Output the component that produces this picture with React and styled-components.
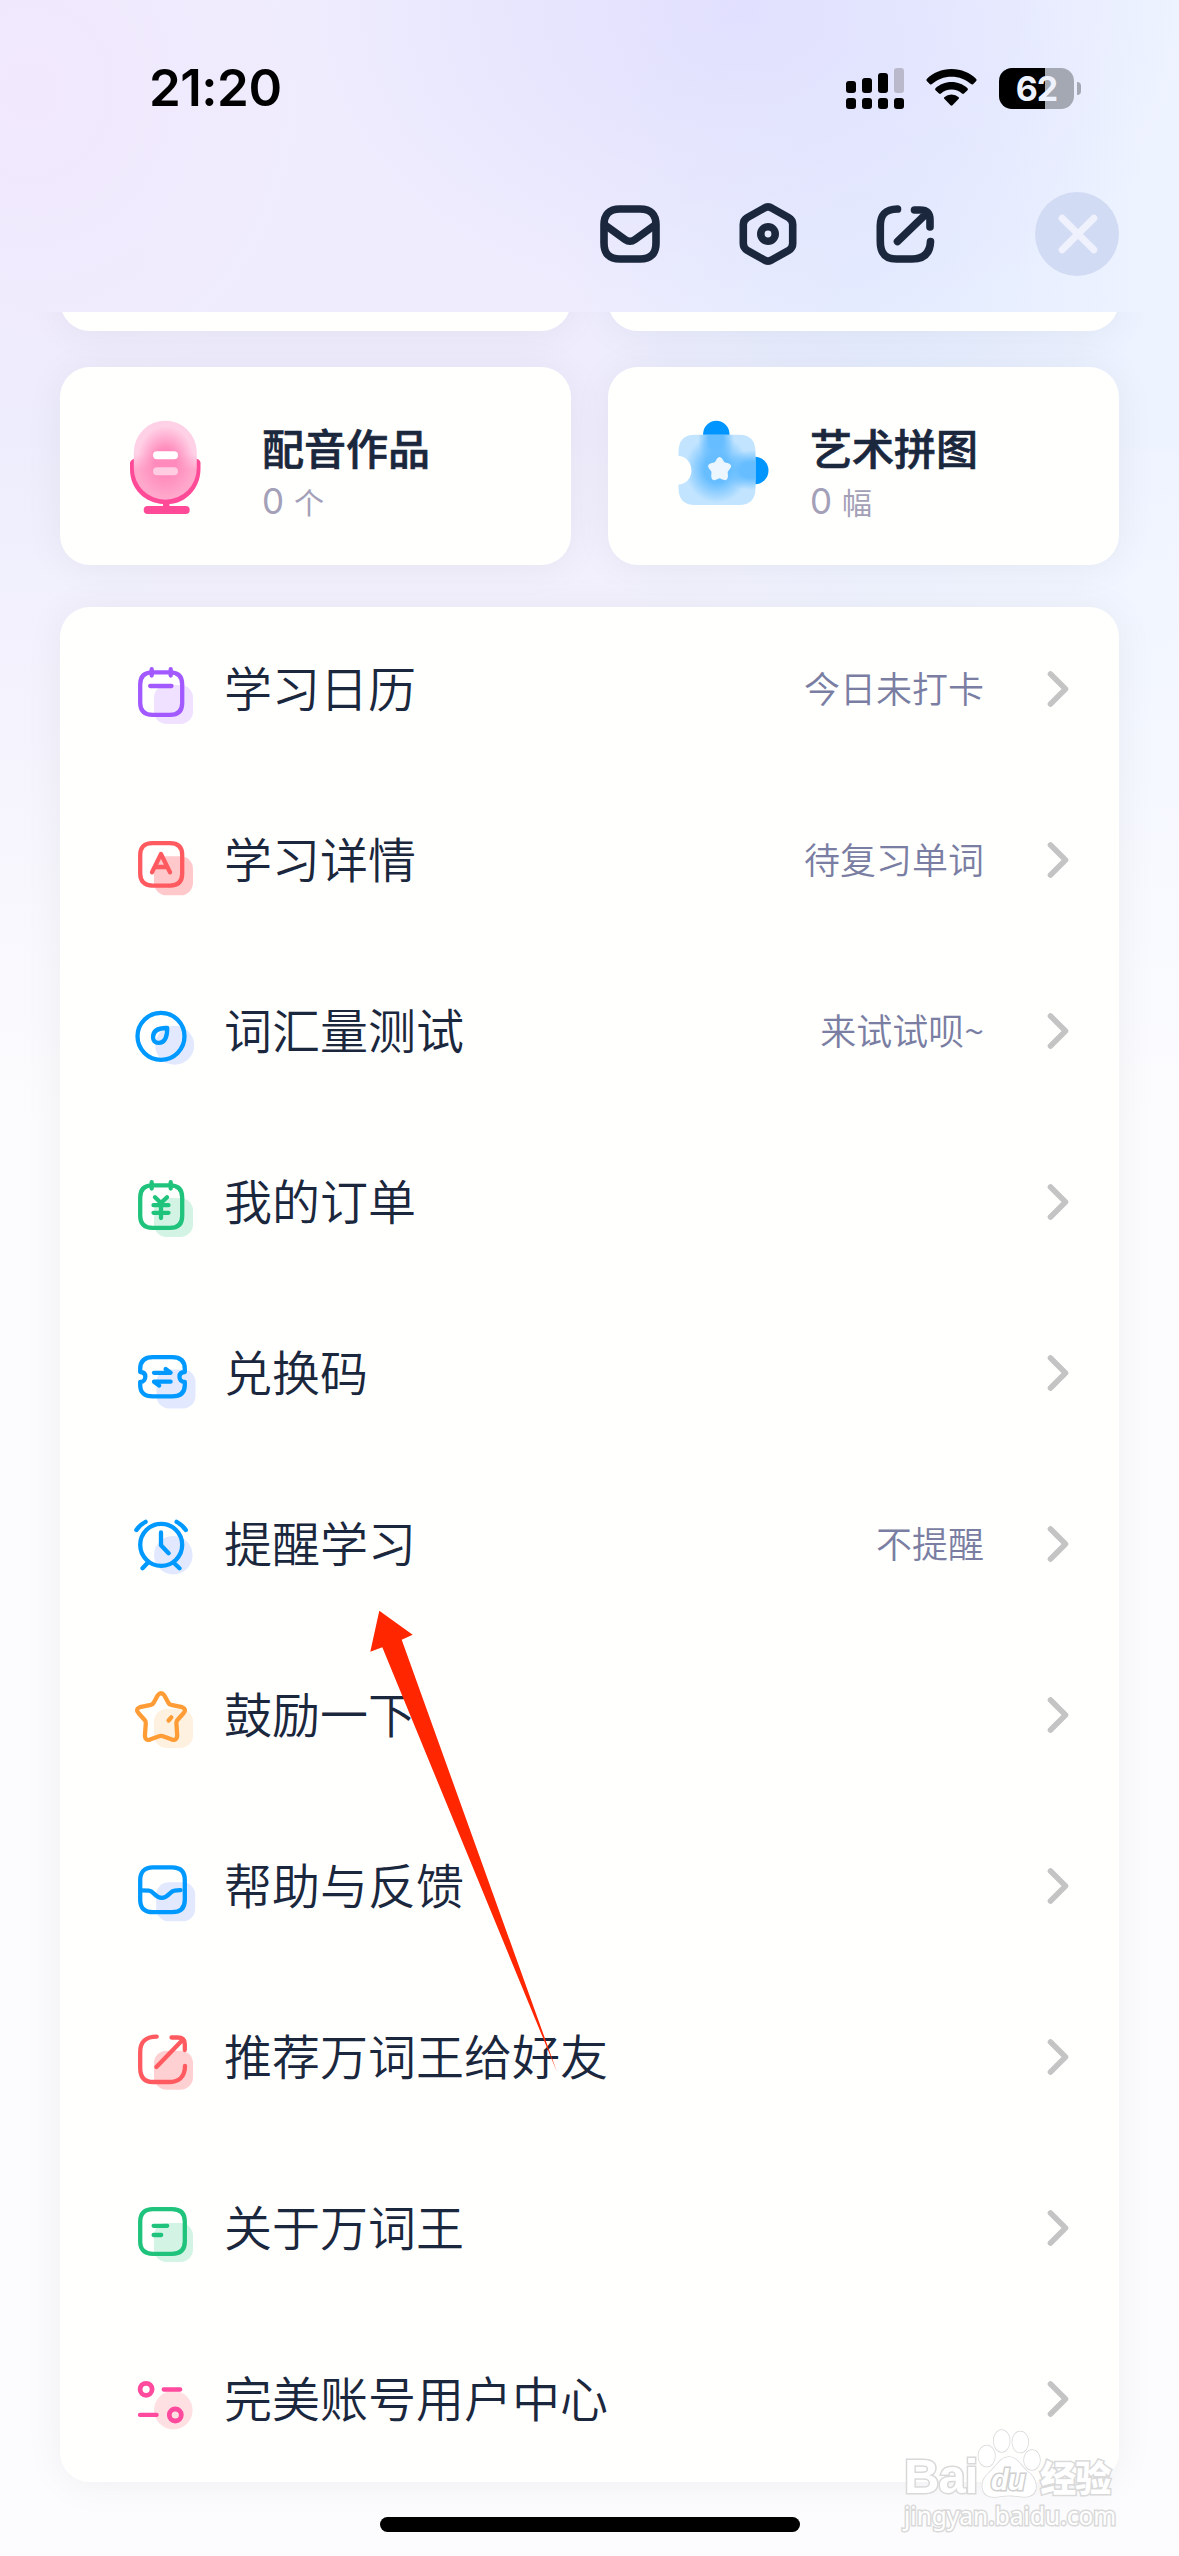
import { useState } from 'react';
import styled, { createGlobalStyle, css } from 'styled-components';

const GlobalStyle = createGlobalStyle`
    * {
        box-sizing: border-box;
    }

    body {
        margin: 0;
        font-family: "Inter", "Noto Sans CJK SC", sans-serif;
        background: #fbfcfe;
    }
`

const backdrop = css`
    background-color: #fcfcfe;
    background-image:
        linear-gradient(180deg, rgba(252,252,254,0) 0, rgba(252,252,254,0) 430px, #fcfcfe 1120px),
        radial-gradient(ellipse 300px 330px at 30px 90px, rgba(242,230,253,0.75), rgba(242,230,253,0) 100%),
        radial-gradient(ellipse 460px 330px at 740px 10px, rgba(223,221,254,0.85), rgba(223,221,254,0) 100%),
        radial-gradient(ellipse 300px 330px at 860px 260px, rgba(226,234,254,0.8), rgba(226,234,254,0) 100%),
        linear-gradient(90deg, #eeedfd 0, #efedfd 600px, #eaf0fe 900px, #eef4ff 1179px);
    background-size: 1179px 2556px;
    background-repeat: no-repeat;
`

const Page = styled.div`
    position: relative;
    width: 1179px;
    height: 2556px;
    display: flex;
    flex-direction: column;
    overflow: hidden;
    ${backdrop}
`

const Header = styled.header`
    height: 312px;
    flex-shrink: 0;
    ${backdrop}
`

const StatusBar = styled.div`
    height: 174px;
    padding: 2px 98px 0 149px;
    display: flex;
    align-items: center;
    justify-content: space-between;
`

const Time = styled.span`
    font-size: 51px;
    line-height: 60px;
    font-weight: 600;
    letter-spacing: -0.5px;
    color: #000;
`

const StatusIcons = styled.div`
    display: flex;
    align-items: center;
    gap: 22px;
`

const Battery = styled.div`
    display: flex;
    align-items: center;
    gap: 3px;
`

const BatteryBody = styled.div`
    width: 75px;
    height: 41px;
    border-radius: 13px;
    display: flex;
    align-items: center;
    justify-content: center;
    font-size: 34px;
    line-height: 41px;
    font-weight: 700;
    letter-spacing: -1px;
    color: #eef2fe;
    background: linear-gradient(90deg, #000 62%, #a3a8b2 62%);
`

const BatteryTip = styled.div`
    width: 4px;
    height: 13px;
    border-radius: 0 4px 4px 0;
    background: #a3a8b2;
`

const ToolBar = styled.nav`
    height: 120px;
    padding-right: 60px;
    display: flex;
    align-items: center;
    justify-content: flex-end;
`

const ToolButton = styled.button`
    width: 60px;
    height: 62px;
    margin-right: ${(props) => props.$gap}px;
    padding: 0;
    border: none;
    background: transparent;
    cursor: pointer;
`

const CloseButton = styled.button`
    width: 84px;
    height: 84px;
    padding: 0 0 0 2px;
    border: none;
    border-radius: 50%;
    display: flex;
    align-items: center;
    justify-content: center;
    background: #d2dbf4;
    cursor: pointer;
`

const Content = styled.main`
    flex: 1;
    min-height: 0;
    padding: 0 60px;
    overflow: hidden;
`

// scrolled up: only the bottom edge of the first row shows
const Tiles = styled.div`
    margin-top: -179px;
    display: grid;
    grid-template-columns: 1fr 1fr;
    grid-auto-rows: 198px;
    gap: 36px 37px;
`

const Tile = styled.div`
    border-radius: 30px;
    padding-left: 68px;
    display: flex;
    align-items: center;
    background: #fffffe;
    box-shadow: 0 2px 40px rgba(0,0,0,0.055);
`

const TileIcon = styled.svg`
    width: 94px;
    height: 98px;
    margin-top: 4px;
    flex-shrink: 0;
    overflow: visible;
`

const TileInfo = styled.div`
    margin: 14px 0 0 40px;
    display: flex;
    flex-direction: column;
    color: #1a273d;
`

const TileTitle = styled.span`
    font-family: "Noto Sans CJK SC", sans-serif;
    font-size: 42px;
    line-height: 54px;
    font-weight: 500;
    -webkit-text-stroke: 0.7px #1a273d;
`

const TileCount = styled.span`
    margin-top: 2px;
    font-size: 35px;
    line-height: 50px;
    color: #a3a0b8;

    small {
        margin-left: 10px;
        font-size: 30px;
        font-family: "Noto Sans CJK SC", sans-serif;
    }
`

const Menu = styled.ul`
    height: 1875px;
    margin: 42px 0 0;
    padding: 0;
    list-style: none;
    display: flex;
    flex-direction: column;
    justify-content: center;
    border-radius: 30px;
    background: #fffffe;
    box-shadow: 0 2px 40px rgba(0,0,0,0.055);
`

const MenuRow = styled.li`
    height: 171px;
    flex-shrink: 0;
    padding: 0 50px 1px 72px;
    display: flex;
    align-items: center;
    font-family: "Noto Sans CJK SC", sans-serif;
    cursor: pointer;
`

const MenuIcon = styled.svg`
    width: 64px;
    height: 64px;
    overflow: visible;
    color: ${(props) => props.$color};
`

const MenuLabel = styled.span`
    flex: 1;
    margin-left: 28px;
    padding-bottom: 6px;
    font-size: 48px;
    line-height: 60px;
    font-weight: 350;
    color: #1a273d;
`

const MenuHint = styled.span`
    margin-right: 63px;
    padding-bottom: 4px;
    font-size: 36px;
    line-height: 48px;
    font-weight: 350;
    color: #7a7ea2;
`

const Chevron = styled.svg`
    width: 22px;
    height: 38px;
`

const HomeBar = styled.div`
    position: absolute;
    left: 380px;
    bottom: 24px;
    width: 420px;
    height: 15px;
    border-radius: 8px;
    background: #000;
`

const Pointer = styled.svg`
    position: absolute;
    left: 370px;
    top: 1610px;
    width: 190px;
    height: 464px;
`

const Watermark = styled.div`
    position: absolute;
    left: 904px;
    top: 2428px;
    width: 216px;
    color: #fff;
    -webkit-text-stroke: 3px #d9d9d9;
    paint-order: stroke fill;
`

const WatermarkTop = styled.div`
    height: 72px;
    display: flex;
    align-items: flex-end;
    font-family: "Liberation Sans", sans-serif;
    font-size: 49px;
    line-height: 48px;
    font-weight: 700;
    letter-spacing: -1px;

    svg {
        margin-left: 3px;
        flex-shrink: 0;
        overflow: visible;
    }

    b {
        height: 42px;
        margin-left: 4px;
        font-family: "Noto Sans CJK SC", sans-serif;
        font-size: 36px;
        line-height: 36px;
    }
`

const WatermarkUrl = styled.div`
    margin-top: 3px;
    font-family: "Noto Sans", sans-serif;
    font-size: 24.5px;
    line-height: 25px;
    white-space: nowrap;
`

const Shade = ({ x = 22, y, size = 39, fill }) => (
    <rect x={x} y={y} width={size} height={size} rx="12.5" fill={fill} />
)

const Stroke = ({ d }) => (
    <path d={d} fill="none" stroke="currentColor" strokeWidth="4.3" strokeLinecap="round" strokeLinejoin="round" />
)

const menuItems = [
    {
        label: '学习日历',
        hint: '今日未打卡',
        color: '#a259ff',
        icon: <>
            <Shade y={28} fill="#efe1ff" />
            <Stroke d="M20.5 15.4H38C46.5 15.4 50.2 20 50.2 27.5V46C50.2 53.5 46.5 57.9 38 57.9H20.5C12 57.9 8.2 53.5 8.2 46V27.5C8.2 20 12 15.4 20.5 15.4Z" />
            <Stroke d="M19.7 12.2V18.6M38.7 12.2V18.6M18.2 29H39.5" />
        </>,
    },
    {
        label: '学习详情',
        hint: '待复习单词',
        color: '#ff5a5f',
        icon: <>
            <Shade y={28.3} fill="#ffc9cb" />
            <Stroke d="M20.5 15.2H38C46.5 15.2 50.2 19.5 50.2 27V45.5C50.2 53 46.5 57.6 38 57.6H20.5C12 57.6 8.2 53 8.2 45.5V27C8.2 19.5 12 15.2 20.5 15.2Z" />
            <Stroke d="M20 44.3L29 26L38 44.3M24.5 39H33.5" />
        </>,
    },
    {
        label: '词汇量测试',
        hint: '来试试呗~',
        color: '#0099ff',
        icon: <>
            <circle cx="42.7" cy="46.3" r="19.5" fill="#e2e9ff" />
            <circle cx="29" cy="37.3" r="23.5" fill="none" stroke="currentColor" strokeWidth="4.3" />
            <Stroke d="M35.2 29C35.4 36.5 33.5 43.9 26.5 43.9C23 43.9 21 41.4 21 38C21.2 31.5 27 28.8 35.2 29Z" />
        </>,
    },
    {
        label: '我的订单',
        color: '#1fc37b',
        icon: <>
            <Shade y={28} fill="#d3f4e4" />
            <Stroke d="M20.5 15.4H38C46.5 15.4 50.2 20 50.2 27.5V46C50.2 53.5 46.5 57.9 38 57.9H20.5C12 57.9 8.2 53.5 8.2 46V27.5C8.2 20 12 15.4 20.5 15.4Z" />
            <Stroke d="M19.7 12.2V18.6M38.7 12.2V18.6" />
            <Stroke d="M23 27.2L29 33L35 27.2M29 33V48M21.5 35.2H36.5M21.5 42.8H36.5" />
        </>,
    },
    {
        label: '兑换码',
        color: '#0099ff',
        icon: <>
            <Shade x={24.5} y={28.5} fill="#e2e9ff" />
            <Stroke d="M8.2 31V28C8.2 20 12.5 16.2 21 16.2H40C48.5 16.2 52.8 20 52.8 28V31C49 31 47.5 33.2 47.5 35.7C47.5 38.2 49 41 52.8 41V44C52.8 52 48.5 55.4 40 55.4H21C12.5 55.4 8.2 52 8.2 44V41C12 41 13.3 38.2 13.3 35.7C13.3 33.2 12 31 8.2 31Z" />
            <Stroke d="M22 31.8H38.6L33.6 28M38.6 40.7H22L27.2 44.5" />
        </>,
    },
    {
        label: '提醒学习',
        hint: '不提醒',
        color: '#0099ff',
        icon: <>
            <circle cx="41.3" cy="43.2" r="19.3" fill="#e2e9ff" />
            <circle cx="29.2" cy="32.8" r="21" fill="none" stroke="currentColor" strokeWidth="4.3" />
            <Stroke d="M29 20.5V33.3L36.6 41.3M4.4 18Q7.5 13 13.6 9.8M44.6 9.8Q50.5 13 53.8 18M15.5 51L10.5 56.3M42 51L47.5 56.3" />
        </>,
    },
    {
        label: '鼓励一下',
        color: '#ff9c35',
        icon: <>
            <Shade y={26} fill="#fff1e0" />
            <Stroke d="M25.6 12.5Q29 8 32.4 12.5L36.2 19.5Q37 21.2 39 21.8L50.2 24.2Q55 26 51.5 30.2L45.2 37.2Q44.2 38.5 44.4 40.2L45.2 52.8Q44.8 58 40 56.6L31 53.3Q29 52.6 27 53.3L18 56.6Q13.2 58 12.9 52.8L13.8 40.2Q13.9 38.5 12.9 37.2L6.6 30.2Q3 26 7.8 24.2L19 21.8Q21 21.2 21.8 19.5Z" />
            <Stroke d="M39.3 34.3L36.6 37.5" />
        </>,
    },
    {
        label: '帮助与反馈',
        color: '#0099ff',
        icon: <>
            <Shade x={24.2} y={28.3} fill="#e2e9ff" />
            <Stroke d="M21 13.4H40C48.5 13.4 52.8 18 52.8 26V46C52.8 54 48.5 58.2 40 58.2H21C12.5 58.2 8.2 54 8.2 46V26C8.2 18 12.5 13.4 21 13.4Z" />
            <Stroke d="M8.5 36.3L17 36.7C22 37 22.5 43.8 29.8 43.8C37 43.8 37.5 37 42.5 36.6L48.5 36.2" />
        </>,
    },
    {
        label: '推荐万词王给好友',
        color: '#ff5a5f',
        icon: <>
            <Shade y={25.7} fill="#ffd0d1" />
            <Stroke d="M24.7 11.7C13 11.7 8.2 17.5 8.2 27V43C8.2 53 13 57 21 57H37C46.5 57 53 52 53 41" />
            <Stroke d="M39.5 12.5H45.5C51 12.5 52.8 14.5 52.8 19V25M24.4 42L51 14.5" />
        </>,
    },
    {
        label: '关于万词王',
        color: '#1fc37b',
        icon: <>
            <Shade y={27} fill="#d3f4e4" />
            <Stroke d="M21 13.2H40C48.5 13.2 52.8 17.5 52.8 25.5V45.5C52.8 53.5 48.5 57.8 40 57.8H21C12.5 57.8 8.2 53.5 8.2 45.5V25.5C8.2 17.5 12.5 13.2 21 13.2Z" />
            <Stroke d="M21.6 29.8H35.2M21.6 39H29.2" />
        </>,
    },
    {
        label: '完美账号用户中心',
        color: '#ff4a9e',
        icon: <>
            <circle cx="41.3" cy="43.2" r="19.3" fill="#ffe0e2" />
            <circle cx="14.1" cy="22.3" r="6" fill="none" stroke="currentColor" strokeWidth="4.8" />
            <circle cx="43.3" cy="48" r="6" fill="none" stroke="currentColor" strokeWidth="4.8" />
            <Stroke d="M31.7 22.5H48.2M8 47.9H24.6" />
        </>,
    },
]

const SignalIcon = () => (
    <svg width="58" height="41" viewBox="0 0 58 41">
        <rect x="0" y="13" width="10" height="12" rx="3" />
        <rect x="16" y="10" width="10" height="15" rx="3" />
        <rect x="32" y="5" width="10" height="20" rx="3" />
        <rect x="48" y="0" width="10" height="25" rx="3" fill="#b9b9cb" />
        {[0, 16, 32, 48].map((x) => <rect key={x} x={x} y="30" width="10" height="11" rx="3" />)}
    </svg>
)

const WifiIcon = () => (
    <svg width="51" height="38" viewBox="0 0 51 38">
        <path d="M25.5 0C35.5 0 44 3.8 50 9.7Q51.2 11 50 12.2L47 15.2Q46 16 45 15.1C39.8 10.3 33 7.7 25.5 7.7S11.2 10.3 6 15.1Q5 16 4 15.2L1 12.2Q-.2 11 1 9.7C7 3.8 15.5 0 25.5 0Z" />
        <path d="M25.5 13C31.8 13 37.3 15.4 41.5 19.2Q42.4 20.2 41.5 21.2L38 24.5Q37 25.3 36 24.5C33.2 22.1 29.6 20.6 25.5 20.6S17.8 22.1 15 24.5Q14 25.3 13 24.5L9.5 21.2Q8.6 20.2 9.5 19.2C13.7 15.4 19.2 13 25.5 13Z" />
        <path d="M25.5 25.5Q29.8 25.5 32.7 28.2Q33.4 29 32.7 29.8L26.5 36.3Q25.5 37.2 24.5 36.3L18.3 29.8Q17.6 29 18.3 28.2Q21.2 25.5 25.5 25.5Z" />
    </svg>
)

const ToolIcon = ({ children }) => (
    <svg width="60" height="62" viewBox="0 0 60 62" fill="none" stroke="#1a273d" strokeWidth="7.6" strokeLinecap="round" strokeLinejoin="round">
        {children}
    </svg>
)

const MicIcon = () => (
    <TileIcon viewBox="0 0 94 98">
        <defs>
            <linearGradient id="micBody" x1="0" y1="0" x2="0" y2="1">
                <stop offset="0.42" stopColor="#ffd1e6" />
                <stop offset="0.62" stopColor="#ffa8cc" />
            </linearGradient>
            <radialGradient id="micGlow">
                <stop offset="0.35" stopColor="#ff8abb" />
                <stop offset="1" stopColor="#ff8abb" stopOpacity="0" />
            </radialGradient>
        </defs>
        <path d="M2 43.5Q3.5 40 6 40H69Q71.5 40 72.5 43.5V50C72.5 71 56 84.500 41.500 85V88H35V85C18 84 2 71 2 50Z" fill="#ff4a97" />
        <rect x="5.8" y="1.7" width="63" height="79" rx="31.5" fill="url(#micBody)" />
        <ellipse cx="37.5" cy="43" rx="29" ry="36" fill="url(#micGlow)" />
        <rect x="15.7" y="87" width="46" height="8" rx="4" fill="#ff4a97" />
        <rect x="25" y="32.3" width="25" height="8" rx="4" fill="#fff" />
        <rect x="25" y="48.3" width="25" height="8" rx="4" fill="#ffcce2" />
    </TileIcon>
)

const PuzzleIcon = () => (
    <TileIcon viewBox="0 0 94 98">
        <defs>
            <radialGradient id="puzzleGlow">
                <stop offset="0.4" stopColor="#66bdff" />
                <stop offset="1" stopColor="#66bdff" stopOpacity="0" />
            </radialGradient>
            <clipPath id="puzzleBody">
                <path d="M19 15.7H63Q79.5 15.7 79.5 33V69Q79.5 86 63 86H19Q2.5 86 2.5 69V65.5C10 65.5 15.5 59 15.5 51.5S10 37 2.5 37V33Q2.5 15.7 19 15.7Z" />
            </clipPath>
        </defs>
        <circle cx="40.3" cy="15" r="13.2" fill="#0095ff" />
        <circle cx="78.8" cy="51.5" r="13.7" fill="#0095ff" />
        <g clipPath="url(#puzzleBody)">
            <rect width="94" height="98" fill="#c2e4ff" />
            <ellipse cx="41" cy="50" rx="32" ry="34" fill="url(#puzzleGlow)" />
            <ellipse cx="40" cy="20" rx="18" ry="28" fill="url(#puzzleGlow)" />
            <ellipse cx="75" cy="51" rx="28" ry="20" fill="url(#puzzleGlow)" />
        </g>
        <path d="M40.9 39.8Q43.6 36 46.3 39.8L48.3 43.2L52.3 44.3Q56.8 46 54.2 49.5L51.7 52.8L52 57.5Q51.3 62.3 47.2 60.8L43.6 59.3L40 60.8Q35.9 62.3 35.2 57.5L35.5 52.8L33 49.5Q30.4 46 34.9 44.3L38.9 43.2Z" fill="#ebf6ff" />
    </TileIcon>
)

const tiles = [
    { title: '配音作品', count: 0, unit: '个', icon: <MicIcon /> },
    { title: '艺术拼图', count: 0, unit: '幅', icon: <PuzzleIcon /> },
]

const App = () => {

    const [closed, setClosed] = useState(false);

    return (
        <>
            <GlobalStyle />
            <Page>
                <Header>
                    <StatusBar>
                        <Time>21:20</Time>
                        <StatusIcons>
                            <SignalIcon />
                            <WifiIcon />
                            <Battery>
                                <BatteryBody>62</BatteryBody>
                                <BatteryTip />
                            </Battery>
                        </StatusIcons>
                    </StatusBar>
                    <ToolBar>
                        <ToolButton $gap={78}>
                            <ToolIcon>
                                <path d="M20 6H40C51 6 56 11.5 56 22V40C56 50.5 51 56 40 56H20C9 56 4 50.5 4 40V22C4 11.5 9 6 20 6Z" />
                                <path d="M5 22L25 36.5Q30 40 35 36.5L55 22" />
                            </ToolIcon>
                        </ToolButton>
                        <ToolButton $gap={77}>
                            <ToolIcon>
                                <path d="M26 5.2Q30 2.7 34 5.2L50.5 14.5Q54.7 17 54.7 21.5V40.5Q54.7 45 50.5 47.5L34 56.8Q30 59.3 26 56.8L9.5 47.5Q5.3 45 5.3 40.5V21.5Q5.3 17 9.5 14.5Z" />
                                <circle cx="30" cy="31" r="7.2" />
                            </ToolIcon>
                        </ToolButton>
                        <ToolButton $gap={100}>
                            <ToolIcon>
                                <path d="M22.500 6C9 6.500 5.300 12.500 5.300 23V38C5.300 51 10.500 56 21.500 56H37C49 56 55 50 55.500 38.500" />
                                <path d="M39.500 7H45C52.500 7 55 10 55 17V24M22.500 38.500L51.500 10.500" />
                            </ToolIcon>
                        </ToolButton>
                        <CloseButton onClick={() => setClosed(!closed)}>
                            <svg width="40" height="40" viewBox="0 0 40 40" stroke="#eff2fd" strokeWidth="7" strokeLinecap="round">
                                <path d="M4.2 4.2L35.8 35.8M35.8 4.2L4.2 35.8" />
                            </svg>
                        </CloseButton>
                    </ToolBar>
                </Header>

                <Content>
                    <Tiles>
                        <Tile />
                        <Tile />
                        {tiles.map((tile) => (
                            <Tile key={tile.title}>
                                {tile.icon}
                                <TileInfo>
                                    <TileTitle>{tile.title}</TileTitle>
                                    <TileCount>{tile.count}<small>{tile.unit}</small></TileCount>
                                </TileInfo>
                            </Tile>
                        ))}
                    </Tiles>
                    <Menu>
                        {menuItems.map((item) => (
                            <MenuRow key={item.label}>
                                <MenuIcon viewBox="0 0 64 64" $color={item.color}>{item.icon}</MenuIcon>
                                <MenuLabel>{item.label}</MenuLabel>
                                {item.hint && <MenuHint>{item.hint}</MenuHint>}
                                <Chevron viewBox="0 0 22 38" fill="none" stroke="#c4c4c4" strokeWidth="5.6" strokeLinecap="round" strokeLinejoin="round">
                                    <path d="M3.5 4L18.5 19L3.5 34" />
                                </Chevron>
                            </MenuRow>
                        ))}
                    </Menu>
                </Content>

                <HomeBar />
                <Pointer viewBox="0 0 190 464">
                    <path d="M9.3 .7L42.7 24.7L31.7 29.7L187 462L12.3 37.3L.3 41.7Z" fill="#ff2600" />
                </Pointer>
                <Watermark>
                    <WatermarkTop>
                        Bai
                        <svg width="56" height="72" viewBox="0 0 56 72" fill="#fff" stroke="#d9d9d9" strokeWidth="1.5">
                            <ellipse cx="6.7" cy="28" rx="8.3" ry="10.5" />
                            <ellipse cx="21.7" cy="13" rx="8" ry="11" />
                            <ellipse cx="40.3" cy="14" rx="8" ry="10.5" />
                            <ellipse cx="52" cy="32" rx="8" ry="10" />
                            <path d="M29 29C38 29 41 39 48 44C57 50 60 66 48 68.5C42 69.5 37 67.5 29 67.5S16 70 10 68.5C0 66 0 52 9 45C17 38 20 29 29 29Z" />
                            <text x="11" y="62" fontFamily="Liberation Sans" fontSize="29" fontWeight="700" fontStyle="italic" stroke="#cfcfcf" strokeWidth="3">du</text>
                        </svg>
                        <b>经验</b>
                    </WatermarkTop>
                    <WatermarkUrl>jingyan.baidu.com</WatermarkUrl>
                </Watermark>
            </Page>
        </>
    )
}

export default App;
